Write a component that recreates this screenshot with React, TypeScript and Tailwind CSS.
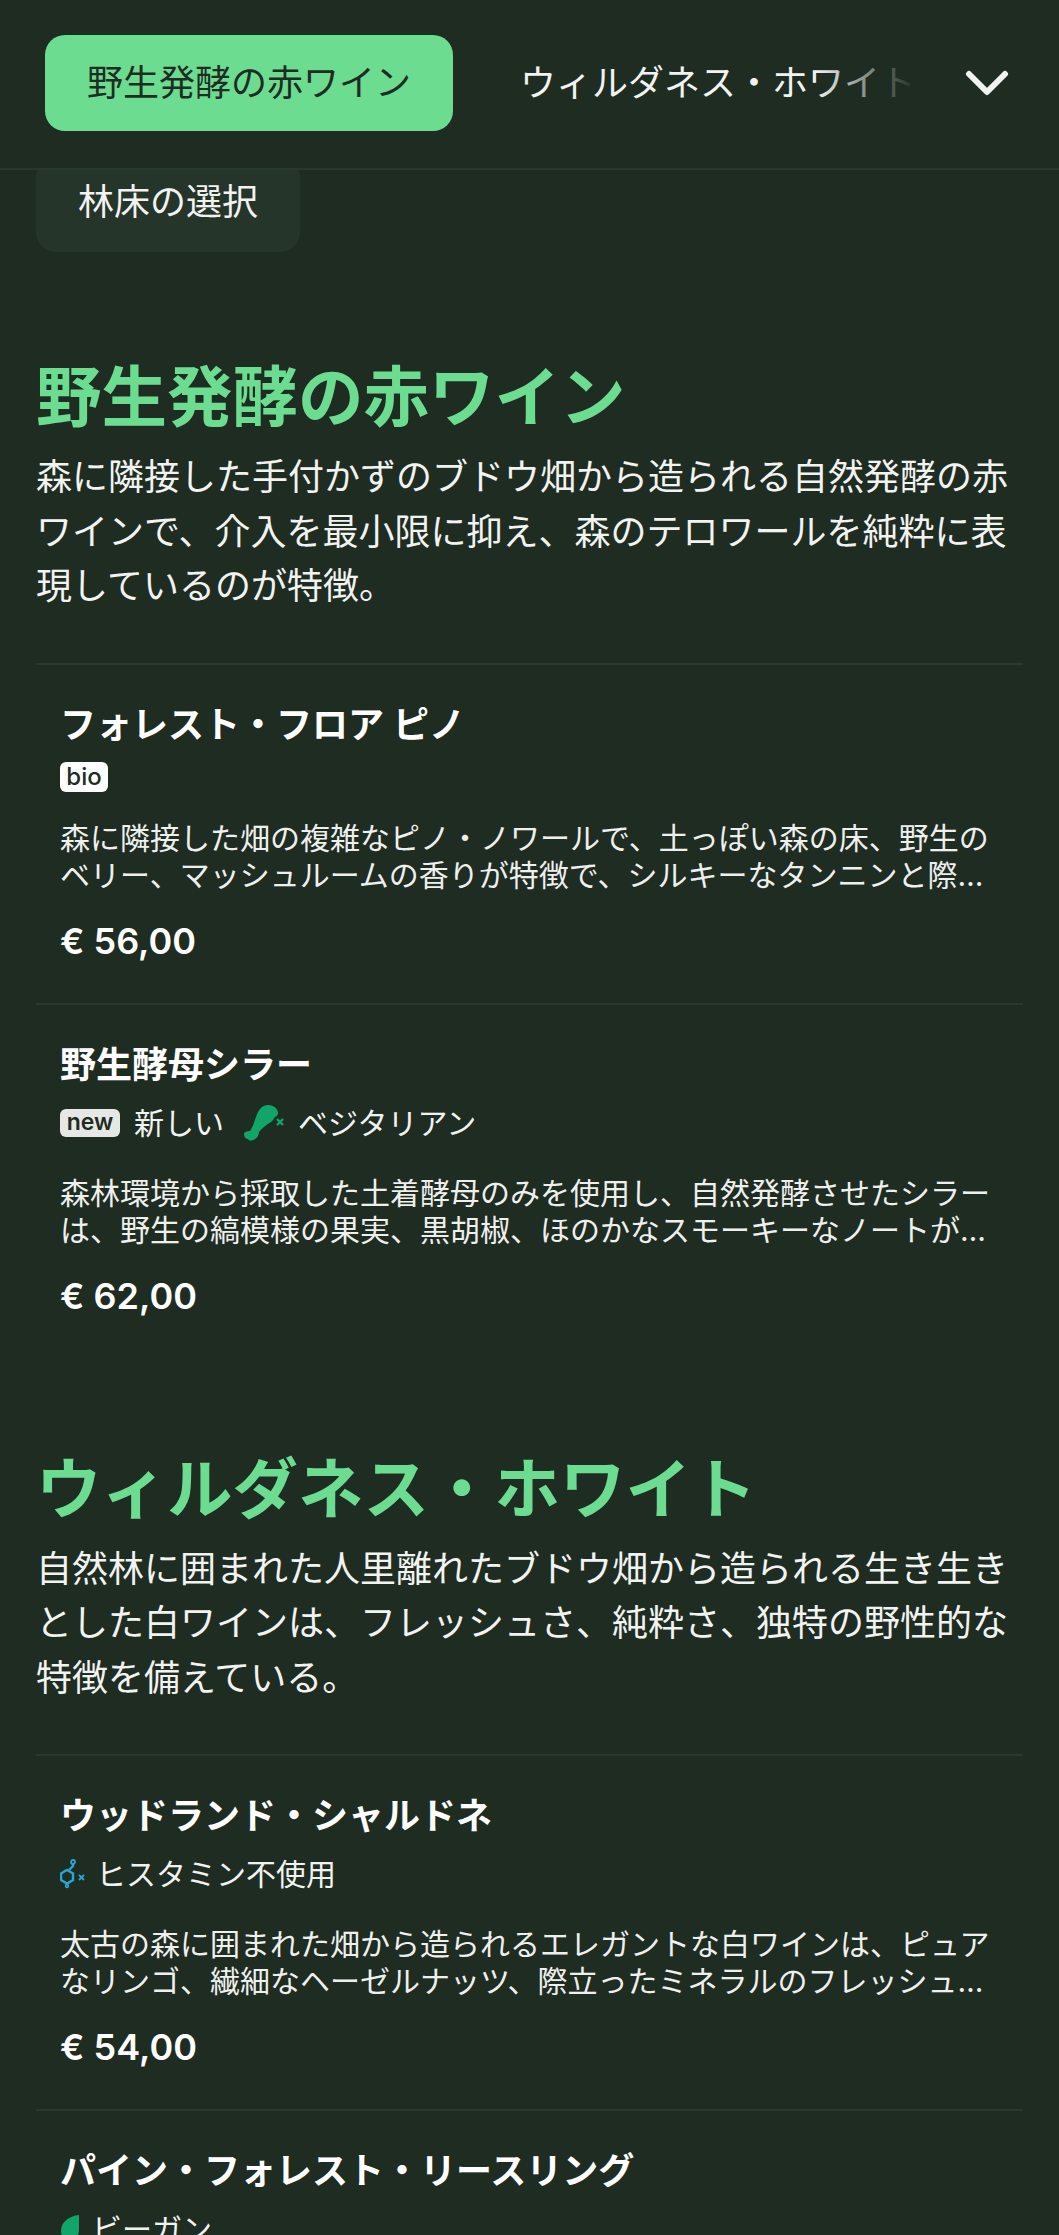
import React from "react";

const fontStack = { fontFamily: '"Inter", "Noto Sans CJK JP", sans-serif' };

function BioBadge() {
  return (
    <span className="flex h-[30px] w-[48px] items-center justify-center rounded-[6px] bg-white text-[24px] font-medium leading-none text-[#1f2c22]">
      bio
    </span>
  );
}

function NewBadge() {
  return (
    <span className="flex h-[28px] w-[60px] items-center justify-center rounded-[6px] bg-[#e5e8e5] text-[23px] font-semibold leading-none text-[#1f2c22]">
      new
    </span>
  );
}

function DrumstickIcon() {
  return (
    <svg width="40" height="36" viewBox="0 0 40 36" className="shrink-0">
      <path
        d="M24 0C30 0 34 4 34 8C34 10 33 11 31 12C29 14 29 16 27 17C22 20 18 23 15 27C15 30 13 33 11 34C8 36 5 36 4 34C2 34 0 32 0 29C0 27 3 26 6 26C9 22 10 17 12 12C14 5 18 0 24 0z"
        fill="#12a56a"
      />
      <path d="M33 14l6 6M39 14l-6 6" stroke="#12a56a" strokeWidth="2.4" />
    </svg>
  );
}

function MoleculeIcon() {
  return (
    <svg width="26" height="30" viewBox="0 0 26 30" fill="none" className="shrink-0" stroke="#2aa7cf" strokeWidth="2.4">
      <path d="M7 11l6 3.5v6.5l-6 3.5-6-3.5v-6.5z" />
      <path d="M9 11l4-4 0-3" />
      <circle cx="13" cy="3" r="2" strokeWidth="1.8" />
      <circle cx="7" cy="27" r="1.4" strokeWidth="1.6" />
      <path d="M19 16l5 5M24 16l-5 5" strokeWidth="1.8" />
    </svg>
  );
}

function LeafIcon() {
  return (
    <svg width="20" height="30" viewBox="0 0 20 30" className="shrink-0">
      <path d="M19 1C9 2 1 8 1 17c0 6 4 10 9 10 6 0 9-5 9-12z" fill="#12a56a" />
    </svg>
  );
}

type Wine = {
  name: string;
  tags: React.ReactNode;
  tall: boolean;
  desc: string;
  price?: string;
};

const reds: Wine[] = [
  {
    name: "フォレスト・フロア ピノ",
    tall: false,
    tags: <BioBadge />,
    desc: "森に隣接した畑の複雑なピノ・ノワールで、土っぽい森の床、野生のベリー、マッシュルームの香りが特徴で、シルキーなタンニンと際立った余韻が長く続きます。森の恵みをそのまま味わえる一本です。",
    price: "€ 56,00",
  },
  {
    name: "野生酵母シラー",
    tall: true,
    tags: (
      <>
        <NewBadge />
        <span className="ml-[14px]">新しい</span>
        <span className="ml-[20px]">
          <DrumstickIcon />
        </span>
        <span className="ml-[14px]">ベジタリアン</span>
      </>
    ),
    desc: "森林環境から採取した土着酵母のみを使用し、自然発酵させたシラーは、野生の縞模様の果実、黒胡椒、ほのかなスモーキーなノートが広がり、力強くも繊細な味わいを生み出しています。",
    price: "€ 62,00",
  },
];

const whites: Wine[] = [
  {
    name: "ウッドランド・シャルドネ",
    tall: true,
    tags: (
      <>
        <MoleculeIcon />
        <span className="ml-[10px]">ヒスタミン不使用</span>
      </>
    ),
    desc: "太古の森に囲まれた畑から造られるエレガントな白ワインは、ピュアなリンゴ、繊細なヘーゼルナッツ、際立ったミネラルのフレッシュな余韻が心地よく長く続く味わいが魅力です。",
    price: "€ 54,00",
  },
  {
    name: "パイン・フォレスト・リースリング",
    tall: true,
    tags: (
      <>
        <LeafIcon />
        <span className="ml-[12px]">ビーガン</span>
      </>
    ),
    desc: "",
  },
];

function WineItem({ wine }: { wine: Wine }) {
  return (
    <article className="border-t-2 border-[#2a382d] px-[24px] pb-[40px] pt-[36px]">
      <h3 className="text-[36px] font-semibold leading-[48px] text-white">{wine.name}</h3>
      <div
        className={`mt-[10px] flex items-center text-[30px] leading-none text-[#f1f3f1] ${
          wine.tall ? "mb-[28px] h-[48px]" : "mb-[25px] h-[36px]"
        }`}
      >
        {wine.tags}
      </div>
      {wine.desc && <p className="line-clamp-2 text-[30px] leading-[37px] text-[#eef0ee]">{wine.desc}</p>}
      {wine.price && <div className="mt-[25px] text-[36px] font-semibold leading-[44px] text-white">{wine.price}</div>}
    </article>
  );
}

function Section({
  title,
  intro,
  wines,
  className,
}: {
  title: string;
  intro: string;
  wines: Wine[];
  className: string;
}) {
  return (
    <section className={className}>
      <h2 className="text-[65.5px] font-bold leading-[90px] text-[#6cdc91]">{title}</h2>
      <p className="mb-[49px] mt-[7px] text-[36px] leading-[54.5px] text-[#f1f3f1]">{intro}</p>
      {wines.map((w) => (
        <WineItem key={w.name} wine={w} />
      ))}
    </section>
  );
}

export default function App() {
  return (
    <div className="h-[2235px] overflow-hidden bg-[#1f2c22]" style={fontStack}>
      <header className="relative z-10 flex h-[170px] items-center border-b-2 border-[#2a382d] bg-[#1f2c22] pb-[2px] pl-[45px]">
        <button className="flex h-[96px] w-[408px] shrink-0 items-center justify-center rounded-[20px] bg-[#6cdc91] text-[36px] text-[#1f2c22]">
          野生発酵の赤ワイン
        </button>
        <div className="relative ml-[67px] w-[396px] shrink-0 overflow-hidden whitespace-nowrap text-[36px] text-[#f1f3f1]">
          ウィルダネス・ホワイト
          <div className="absolute inset-y-0 right-0 w-[100px] bg-gradient-to-r from-transparent to-[#1f2c22]" />
        </div>
        <svg width="44" height="28" viewBox="0 0 44 28" fill="none" className="ml-[49px] shrink-0">
          <path d="M4 5l18 18L40 5" stroke="#f1f3f1" strokeWidth="6" strokeLinecap="round" strokeLinejoin="round" />
        </svg>
      </header>

      <main className="px-[36px]">
        <div className="-mt-[12px] flex h-[94px] w-[264px] items-center justify-center rounded-[20px] bg-[#25352a] pb-[6px] text-[36px] text-[#f1f3f1]">
          林床の選択
        </div>
        <Section
          className="mt-[101px]"
          title="野生発酵の赤ワイン"
          intro="森に隣接した手付かずのブドウ畑から造られる自然発酵の赤ワインで、介入を最小限に抑え、森のテロワールを純粋に表現しているのが特徴。"
          wines={reds}
        />
        <Section
          className="mt-[87px]"
          title="ウィルダネス・ホワイト"
          intro="自然林に囲まれた人里離れたブドウ畑から造られる生き生きとした白ワインは、フレッシュさ、純粋さ、独特の野性的な特徴を備えている。"
          wines={whites}
        />
      </main>
    </div>
  );
}
